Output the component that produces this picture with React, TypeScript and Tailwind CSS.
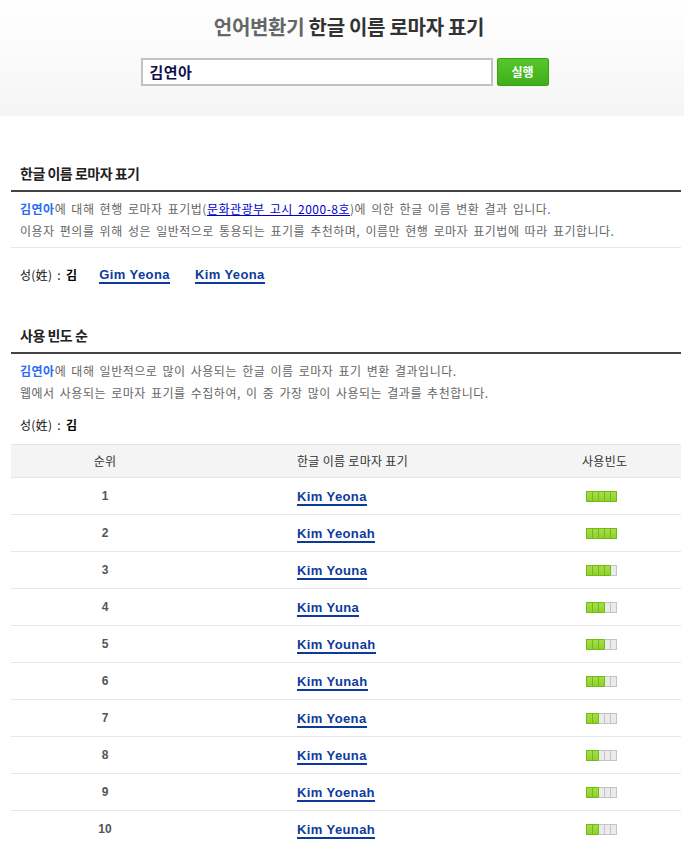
const ko = '[font-family:"Noto_Sans_CJK_KR","Noto_Sans",sans-serif]';
const la = '[font-family:"Liberation_Sans","Noto_Sans_CJK_KR",sans-serif]';

const rows: { rank: number; name: string; freq: number }[] = [
  { rank: 1, name: 'Kim Yeona', freq: 5 },
  { rank: 2, name: 'Kim Yeonah', freq: 5 },
  { rank: 3, name: 'Kim Youna', freq: 4 },
  { rank: 4, name: 'Kim Yuna', freq: 3 },
  { rank: 5, name: 'Kim Younah', freq: 3 },
  { rank: 6, name: 'Kim Yunah', freq: 3 },
  { rank: 7, name: 'Kim Yoena', freq: 2 },
  { rank: 8, name: 'Kim Yeuna', freq: 2 },
  { rank: 9, name: 'Kim Yoenah', freq: 2 },
  { rank: 10, name: 'Kim Yeunah', freq: 2 },
];

// 5칸 사용빈도 막대
function Bar({ n }: { n: number }) {
  return (
    <div className="flex">
      {[0, 1, 2, 3, 4].map((i) =>
        i < n ? (
          <div
            key={i}
            className={`w-[7px] h-[11px] border border-[#6cbd14] bg-gradient-to-b from-[#a8dc48] to-[#93cf2c] ${i > 0 ? '-ml-px' : ''}`}
          />
        ) : (
          <div
            key={i}
            className={`w-[7px] h-[11px] border border-[#c4c4c4] bg-[#ebebeb] ${i > 0 ? '-ml-px' : ''} ${i === n ? 'border-l-[#6cbd14]' : ''}`}
          />
        ),
      )}
    </div>
  );
}

function Heading({ children }: { children: string }) {
  return (
    <div className="border-b-2 border-[#444] pb-[7px] pl-[9px]">
      <h2 className={`${ko} text-[14px] leading-[20px] font-bold text-[#222] tracking-[-0.5px]`}>{children}</h2>
    </div>
  );
}

function Name({ children }: { children: string }) {
  return (
    <a className={`${la} inline-block text-[13px] leading-[15px] font-bold tracking-[0.4px] text-[#0d3b9c] border-b-2 border-[#0d3b9c] cursor-pointer`}>
      {children}
    </a>
  );
}

const Me = () => <span className="font-bold text-[#2a6df4]">김연아</span>;

const desc = 'pl-[9px] text-[#666] leading-[22px] tracking-[0.5px] [word-spacing:2px]';

export default function App() {
  return (
    <div className={`${ko} min-h-screen bg-white text-[12px]`}>
      {/* 상단 검색 영역 */}
      <div className="h-[116px] bg-gradient-to-b from-white to-[#f5f5f5] flex flex-col items-center pt-[13px]">
        <h1 className="text-[20px] leading-[28px] font-bold tracking-[-0.3px] pl-[14px]">
          <span className="text-[#666]">언어변환기</span> <span className="text-[#333]">한글 이름 로마자 표기</span>
        </h1>
        <div className="flex gap-[4px] mt-[17px] ml-[5px]">
          <div className="w-[352px] h-[28px] border-2 border-[#c2c2c2] bg-white flex items-center px-[7px]">
            <span className="text-[15px] font-bold text-[#10104a] tracking-[0.5px]">김연아</span>
          </div>
          <button className="w-[52px] h-[28px] rounded-[2px] border border-[#3c9f17] bg-gradient-to-b from-[#56c72a] to-[#3fae19] text-white text-[12px] font-bold">
            실행
          </button>
        </div>
      </div>

      <div className="pl-[11px] pr-[3px] pt-[47px]">
        {/* 현행 표기법 */}
        <Heading>한글 이름 로마자 표기</Heading>
        <div className={`${desc} pt-[6px] pb-[5px] border-b border-[#e8e8e8]`}>
          <p>
            <Me />에 대해 현행 로마자 표기법(<a className="text-[#0000cc] underline">문화관광부 고시 2000-8호</a>)에 의한 한글 이름 변환 결과 입니다.
          </p>
          <p>이용자 편의를 위해 성은 일반적으로 통용되는 표기를 추천하며, 이름만 현행 로마자 표기법에 따라 표기합니다.</p>
        </div>
        <div className="mt-[17px] pl-[9px] flex items-center h-[20px] gap-[22px]">
          <span className="text-[#111] tracking-[0.3px] [word-spacing:2px]">
            성(姓) : <b className="text-[#000]">김</b>
          </span>
          <div className="flex gap-[25px]">
            <Name>Gim Yeona</Name>
            <Name>Kim Yeona</Name>
          </div>
        </div>

        {/* 사용 빈도 순 */}
        <div className="mt-[40px]">
          <Heading>사용 빈도 순</Heading>
        </div>
        <div className={`${desc} pt-[6px]`}>
          <p>
            <Me />에 대해 일반적으로 많이 사용되는 한글 이름 로마자 표기 변환 결과입니다.
          </p>
          <p>웹에서 사용되는 로마자 표기를 수집하여, 이 중 가장 많이 사용되는 결과를 추천합니다.</p>
        </div>
        <div className="mt-[11px] pl-[9px] leading-[20px] text-[#111] tracking-[0.3px] [word-spacing:2px]">
          성(姓) : <b className="text-[#000]">김</b>
        </div>

        <div className="mt-[9px] border-t border-[#e5e5e5]">
          <div className="h-[33px] bg-[#f4f4f4] border-b border-[#e5e5e5] flex items-center text-[#333] tracking-[0.3px]">
            <div className="w-[188px] text-center">순위</div>
            <div className="w-[376px] pl-[98px]">한글 이름 로마자 표기</div>
            <div className="pl-[7px]">사용빈도</div>
          </div>
          {rows.map((r) => (
            <div key={r.rank} className="h-[37px] border-b border-[#e8e8e8] flex items-center">
              <div className={`${la} w-[188px] text-center text-[12px] font-bold text-[#555]`}>{r.rank}</div>
              <div className="w-[376px] pl-[98px]">
                <Name>{r.name}</Name>
              </div>
              <div className="pl-[11px]">
                <Bar n={r.freq} />
              </div>
            </div>
          ))}
        </div>
      </div>
    </div>
  );
}
